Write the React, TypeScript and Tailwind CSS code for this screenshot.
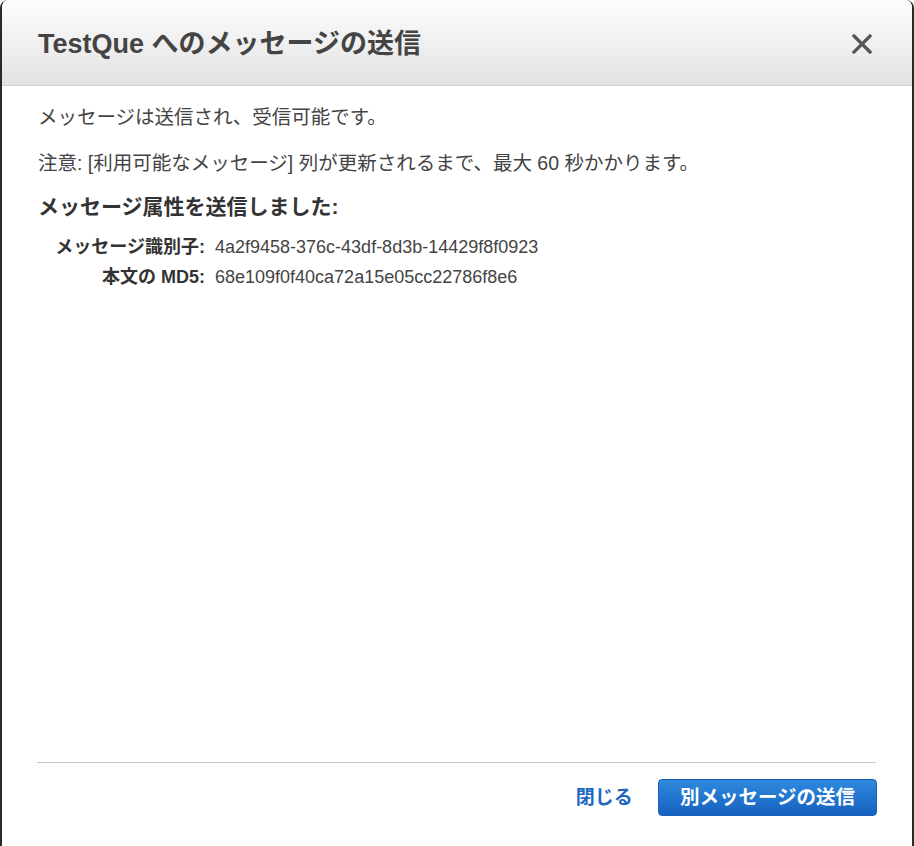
import React from 'react';

const font = "font-['Liberation_Sans','Noto_Sans_CJK_JP',sans-serif]";

const CloseIcon: React.FC = () => (
  <svg width="22" height="22" viewBox="0 0 22 22" aria-hidden="true">
    <path d="M3 3 L19 19 M19 3 L3 19" stroke="#555" strokeWidth="3.2" strokeLinecap="square" />
  </svg>
);

const App: React.FC = () => {
  return (
    <div className={`h-[846px] w-[914px] bg-white ${font}`}>
      <div className="flex h-full flex-col overflow-hidden rounded-t-[8px] border-x-2 border-[#2a2a2a] bg-white">
        {/* header */}
        <div className="flex h-[86px] shrink-0 items-center justify-between border-b border-[#cfcfcf] bg-linear-to-b from-[#fdfdfd] to-[#e3e3e3] pl-[36px] pr-[38px] pt-[3px]">
          <h1 className="text-[27px] font-bold leading-none text-[#444]">TestQue へのメッセージの送信</h1>
          <button className="flex h-[24px] w-[24px] items-center justify-center">
            <CloseIcon />
          </button>
        </div>

        {/* body */}
        <div className="flex-1 px-[36px] pt-[16px] text-[#444]">
          <p className="text-[19.5px] leading-[30px]">メッセージは送信され、受信可能です。</p>
          <p className="mt-[16px] text-[19.5px] leading-[30px]">
            注意: [利用可能なメッセージ] 列が更新されるまで、最大 60 秒かかります。
          </p>
          <h2 className="mt-[14px] text-[21px] font-bold leading-[30px] text-[#333]">メッセージ属性を送信しました:</h2>
          <div className="mt-[10px] grid grid-cols-[167px_1fr] gap-x-[10px] text-[18px] leading-[30px]">
            <div className="text-right font-bold text-[#333]">メッセージ識別子:</div>
            <div className="text-[#444]">4a2f9458-376c-43df-8d3b-14429f8f0923</div>
            <div className="text-right font-bold text-[#333]">本文の MD5:</div>
            <div className="text-[#444]">68e109f0f40ca72a15e05cc22786f8e6</div>
          </div>
        </div>

        {/* footer */}
        <div className="ml-[35px] mr-[36px] flex items-center justify-end gap-[25px] border-t border-[#c6c6c6] pb-[30px] pt-[16px]">
          <button className="text-[19px] font-bold leading-none text-[#1f68c0]">閉じる</button>
          <button className="-mr-[1px] h-[37px] rounded-[4px] border border-[#1a5fb4] bg-linear-to-b from-[#3089dd] to-[#1562c0] px-[21px] text-[19.5px] font-bold leading-none text-white">
            別メッセージの送信
          </button>
        </div>
      </div>
    </div>
  );
};

export default App;
